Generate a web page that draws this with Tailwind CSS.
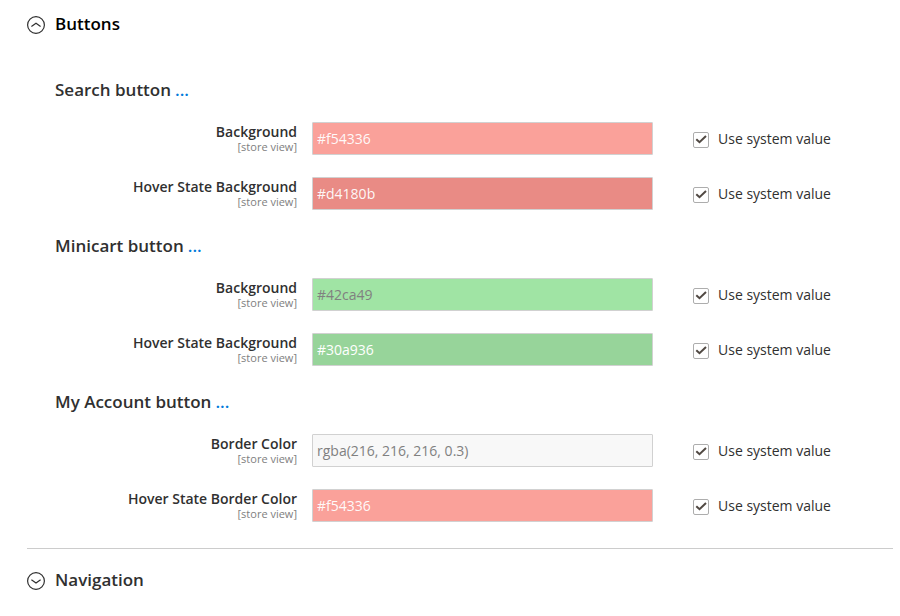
<!DOCTYPE html>
<html lang="en"><head><meta charset="utf-8"><title>Buttons</title>
<script src="https://cdn.jsdelivr.net/npm/@tailwindcss/browser@4"></script></head>
<body class="bg-white pl-[27px] pr-[7px] font-['Open_Sans',sans-serif] text-[14px] text-[#303030]">
<main id="app"></main>
<script>
const sections = [
 ['Search button', [['Background','#f54336','bg-[#faa19a] text-white/95'],['Hover State Background','#d4180b','bg-[#e98b85] text-white/95']]],
 ['Minicart button', [['Background','#42ca49','bg-[#a0e4a4] text-[#808080]'],['Hover State Background','#30a936','bg-[#97d49a] text-white']]],
 ['My Account button', [['Border Color','rgba(216, 216, 216, 0.3)','bg-[#f8f8f8] text-[#808080]'],['Hover State Border Color','#f54336','bg-[#faa19a] text-white/95']]]
];
const head = (t, d, open) => `<h2><button type="button" aria-expanded="${open}" class="flex h-12 w-full items-center gap-[10px] text-[17px] font-semibold ${open ? 'text-black' : ''}"><svg class="mt-[2px] size-[18px] shrink-0" viewBox="0 0 18 18" fill="none" stroke="#303030" stroke-width="1.2"><circle cx="9" cy="9" r="8.4"/><path d="${d}"/></svg>${t}</button></h2>`;
let n = 0;
const row = ([label, value, colors]) => {
  n++;
  return `<div class="flex h-[55px] items-center"><label for="f${n}" class="w-[242px] shrink-0 pb-[2px] text-right font-semibold leading-[18px]">${label}<span class="block text-[11px] font-normal leading-[12px] text-[#808080]">[store view]</span></label><input id="f${n}" value="${value}" disabled class="ml-[15px] h-[33px] w-[341px] rounded-[1px] border border-[#d1d1d1] px-1 ${colors}"><label class="ml-10 flex items-center gap-[9px]"><span class="mt-[2px] grid"><input type="checkbox" checked class="col-start-1 row-start-1 size-4 appearance-none rounded-[2px] border border-[#adadad] bg-white"><svg class="pointer-events-none col-start-1 row-start-1 size-4" viewBox="0 0 16 16" fill="none" stroke="#514943" stroke-width="2"><path d="M3.3 7.2 6.5 10.2 13 4"/></svg></span>Use system value</label></div>`;
};
document.getElementById('app').innerHTML = `<section class="border-b border-[#cccccc] pb-2">${head('Buttons','M4.4 10.5 9 7.2l4.6 3.3',true)}
<div class="pl-7 pt-6">${sections.map(([t, rows]) => `<h3 class="mb-[3px] flex h-[36px] items-center gap-1 text-[17px] font-semibold">${t} <a href="#" class="text-[#007bdb]">...</a></h3><div class="mb-[7px]">${rows.map(row).join('')}</div>`).join('')}</div></section>
<section class="pt-[7px]">${head('Navigation','M4.4 7.8 9 11.1l4.6-3.3',false)}</section>`;
</script></body></html>
